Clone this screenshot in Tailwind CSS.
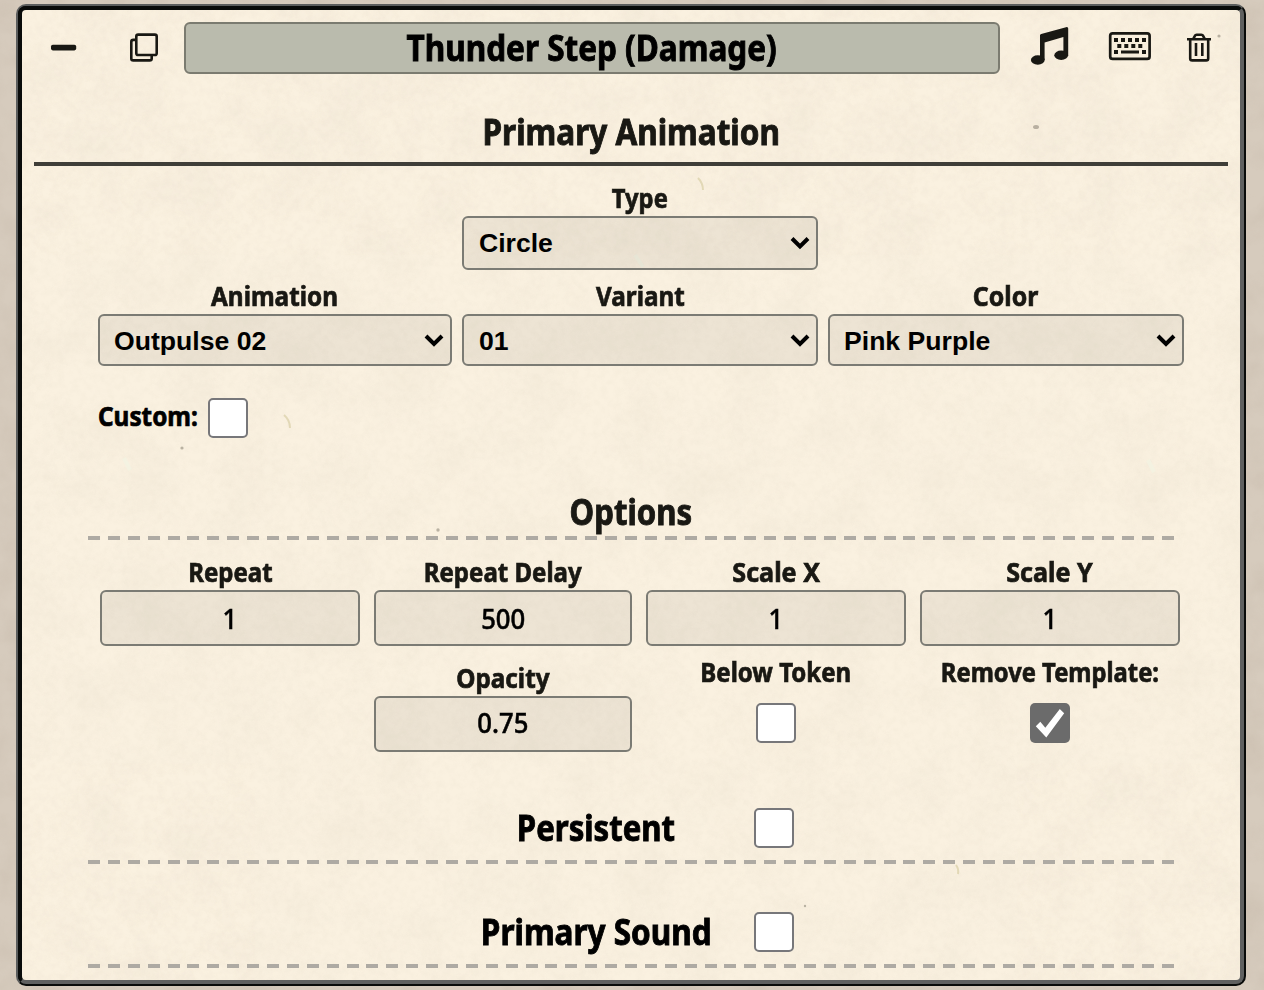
<!DOCTYPE html>
<html lang="en">
<head>
<meta charset="utf-8">
<title>Thunder Step (Damage)</title>
<script src="https://cdn.jsdelivr.net/npm/@tailwindcss/browser@4"></script>
</head>
<body class="relative h-[990px] w-[1264px] overflow-hidden bg-[#d6cbbd] px-4 pt-1 font-['Noto_Sans',sans-serif] text-[#191813]">
<!-- stone texture behind the panel -->
<svg class="absolute inset-0" width="1264" height="990" aria-hidden="true">
  <filter id="stone" x="0" y="0" width="100%" height="100%"><feTurbulence type="fractalNoise" baseFrequency="0.03" numOctaves="4" seed="4"/><feColorMatrix values="0 0 0 0 .5  0 0 0 0 .42  0 0 0 0 .34  .8 0 0 0 -.3"/></filter>
  <rect width="1264" height="990" filter="url(#stone)" opacity=".6"/>
</svg>
<div class="relative h-[982px] w-[1230px] rounded-[10px] border-2 border-t-[#5b5d5d] border-l-[#5b5d5d] border-r-[#090b0a] border-b-[#090b0a] bg-[#090b0a]">
<div class="relative h-[978px] w-[1226px] overflow-hidden rounded-lg border-4 border-t-[#090b0a] border-l-[#090b0a] border-r-[#5f6060] border-b-[#5f6060] bg-[#faf1e0]">
  <!-- paper texture -->
  <svg class="absolute inset-0" width="1218" height="970" aria-hidden="true">
    <filter id="paper" x="0" y="0" width="100%" height="100%"><feTurbulence type="fractalNoise" baseFrequency="0.02" numOctaves="5" seed="9"/><feColorMatrix values="0 0 0 0 .62  0 0 0 0 .56  0 0 0 0 .45  .5 0 0 0 -.18"/></filter>
    <filter id="grain" x="0" y="0" width="100%" height="100%"><feTurbulence type="fractalNoise" baseFrequency="0.14" numOctaves="3" seed="21"/><feColorMatrix values="0 0 0 0 .6  0 0 0 0 .54  0 0 0 0 .43  .5 0 0 0 -.18"/></filter>
    <rect width="1218" height="970" filter="url(#paper)" opacity=".4"/>
    <rect width="1218" height="970" filter="url(#grain)" opacity=".3"/>
    <g fill="#8f887a" opacity=".6"><ellipse cx="1014" cy="117" rx="3" ry="2"/><circle cx="1197" cy="26" r="1.6"/><circle cx="416" cy="520" r="1.7"/><circle cx="783" cy="896" r="1.2"/><circle cx="160" cy="438" r="1.6"/></g>
    <g fill="none" stroke="#d9cfa5" stroke-width="2" opacity=".7"><path d="M676 168q5 5 5 12"/><path d="M262 405q6 5 6 13"/><path d="M934 855q3 4 2 9"/></g>
    <g fill="none" stroke="#f2f4e3" stroke-width="4" opacity=".7"><path d="M102 448l6 12"/><path d="M1126 450l6 12"/><path d="M613 245l8 12"/></g>
  </svg>

  <div class="relative flex flex-col">
    <!-- header -->
    <header class="mt-3 flex h-[52px] items-center">
      <svg class="ml-7 shrink-0" width="28" height="52" viewBox="50 22 28 52"><rect x="51" y="44.800" width="25.200" height="5.600" rx="1.800" fill="#191813"/></svg>
      <svg class="ml-[50px] shrink-0" width="32" height="52" viewBox="128 22 32 52" fill="none" stroke="#191813" stroke-width="2.600"><rect x="136.300" y="34.600" width="20.400" height="20.400" rx="1.800"/><path d="M136 39.900h-2.700a2 2 0 0 0-2 2v16.500a2 2 0 0 0 2 2h16.400a2 2 0 0 0 2-2v-3.200"/></svg>
      <div class="ml-6 flex h-[52px] w-[816px] shrink-0 items-center justify-center rounded-md border-2 border-[#7b7b70] bg-[#babbad] text-[35px] leading-none font-bold text-black [-webkit-text-stroke:0.9px]"><span class="relative -top-px scale-x-90 whitespace-nowrap">Thunder Step (Damage)</span></div>
      <svg class="ml-[29px] shrink-0" width="42" height="52" viewBox="1029 22 42 52" fill="#191813"><path d="M1040 35.500Q1040 34.400 1041.200 34L1066 27.200Q1068.200 26.700 1068.200 28.600V55.500H1063.400V37L1044.600 42.600V60H1040z"/><ellipse cx="1037.800" cy="60" rx="6.900" ry="4.700"/><ellipse cx="1061.200" cy="55.200" rx="6.900" ry="4.700"/></svg>
      <svg class="ml-9 shrink-0" width="46" height="52" viewBox="1107 22 46 52" fill="#191813"><rect x="1110.200" y="33.300" width="39.400" height="25.600" rx="2.500" fill="none" stroke="#191813" stroke-width="2.700"/><path d="M1114 38h4v4h-4zM1121 38h4v4h-4zM1128 38h4v4h-4zM1135 38h4v4h-4zM1142 38h4v4h-4zM1117.300 44h4v4h-4zM1124.300 44h4v4h-4zM1131.300 44h4v4h-4zM1138.300 44h4v4h-4zM1114 50h4v4h-4zM1142 50h4v4h-4zM1121 50.500h18v3h-18z"/></svg>
      <svg class="ml-[33px] shrink-0" width="26" height="52" viewBox="1186 22 26 52" fill="none" stroke="#191813" stroke-width="2.600"><path d="M1187 39.200h24M1193.300 38.800L1195 35.700Q1195.500 34.700 1196.600 34.700H1201.400Q1202.500 34.700 1203 35.700L1204.700 38.800M1190.200 39.500V58.400Q1190.200 60.400 1192.200 60.400H1206.200Q1208.200 60.400 1208.200 58.400V39.500M1196 43v13M1202.300 43v13"/></svg>
    </header>

    <!-- primary animation -->
    <section>
      <h2 class="mt-[38px] flex h-[40px] items-center justify-center text-[35px] leading-none font-bold [-webkit-text-stroke:0.9px]"><span class="relative -top-[0.5px] scale-x-90">Primary Animation</span></h2>
      <div class="mx-3 mt-[10px] h-1 bg-[#3f3e38]"></div>
      <div class="ml-[76px] grid w-[1086px] grid-cols-[354px_356px_356px] gap-x-[10px] text-[27px] leading-none font-bold">
        <div class="col-start-2 mt-[14px]">
          <div class="flex h-9 items-center justify-center pb-[2px] [-webkit-text-stroke:0.7px]"><span class="scale-x-[.88]">Type</span></div>
          <div class="flex h-[54px] items-center justify-between rounded-md border-2 border-[#7b7b74] bg-black/5 pr-[6px] pl-[15px] font-['Liberation_Sans',sans-serif] text-[26.6px] text-black"><span>Circle</span><svg width="20" height="16" viewBox="0 0 20 16" fill="none" stroke="#000" stroke-width="4"><path d="M2 3.500l8 8 8-8"/></svg></div>
        </div>
        <div class="col-start-1 mt-2">
          <div class="flex h-9 items-center justify-center pb-[2px] [-webkit-text-stroke:0.7px]"><span class="scale-x-90">Animation</span></div>
          <div class="flex h-[52px] items-center justify-between rounded-md border-2 border-[#7b7b74] bg-black/5 pr-[6px] pl-[14px] font-['Liberation_Sans',sans-serif] text-[26.6px] text-black"><span class="relative top-px">Outpulse 02</span><svg width="20" height="16" viewBox="0 0 20 16" fill="none" stroke="#000" stroke-width="4"><path d="M2 4l8 8 8-8"/></svg></div>
        </div>
        <div class="mt-2">
          <div class="flex h-9 items-center justify-center pb-[2px] [-webkit-text-stroke:0.7px]"><span class="scale-x-90">Variant</span></div>
          <div class="flex h-[52px] items-center justify-between rounded-md border-2 border-[#7b7b74] bg-black/5 pr-[6px] pl-[15px] font-['Liberation_Sans',sans-serif] text-[26.6px] text-black"><span class="relative top-px">01</span><svg width="20" height="16" viewBox="0 0 20 16" fill="none" stroke="#000" stroke-width="4"><path d="M2 4l8 8 8-8"/></svg></div>
        </div>
        <div class="mt-2">
          <div class="flex h-9 items-center justify-center pb-[2px] [-webkit-text-stroke:0.7px]"><span class="scale-x-[.92]">Color</span></div>
          <div class="flex h-[52px] items-center justify-between rounded-md border-2 border-[#7b7b74] bg-black/5 pr-[6px] pl-[14px] font-['Liberation_Sans',sans-serif] text-[26.6px] text-black"><span class="relative top-px">Pink Purple</span><svg width="20" height="16" viewBox="0 0 20 16" fill="none" stroke="#000" stroke-width="4"><path d="M2 4l8 8 8-8"/></svg></div>
        </div>
      </div>
      <div class="mt-8 ml-[76px] flex h-10 items-center text-[27px] leading-none font-bold text-black"><span class="w-[110px] origin-left -translate-y-[3px] scale-x-90 [-webkit-text-stroke:0.7px]">Custom:</span><span class="h-10 w-10 rounded-[5px] border-2 border-[#77777a] bg-white"></span></div>
    </section>

    <!-- options -->
    <section>
      <h2 class="mt-[54px] flex h-[40px] items-center justify-center text-[35px] leading-none font-bold [-webkit-text-stroke:0.9px]"><span class="relative -top-[0.5px] scale-x-[.89]">Options</span></h2>
      <div class="mt-1 ml-[66px] h-1 w-[1086px] bg-[repeating-linear-gradient(90deg,#aeaaa3_0_12px,transparent_12px_19.89px)]"></div>
      <div class="mt-[14px] ml-[78px] grid w-[1080px] grid-cols-[260px_258px_260px_260px] gap-x-[14px] text-[27px] leading-none font-bold">
        <div>
          <div class="flex h-9 items-center justify-center pb-[2px] [-webkit-text-stroke:0.7px]"><span class="scale-x-[.89]">Repeat</span></div>
          <div class="flex h-14 items-center justify-center rounded-md border-2 border-[#7b7b74] bg-black/5 font-medium text-black [-webkit-text-stroke:0.5px]"><span class="scale-x-95">1</span></div>
        </div>
        <div>
          <div class="flex h-9 items-center justify-center pb-[2px] [-webkit-text-stroke:0.7px]"><span class="scale-x-[.89] whitespace-nowrap">Repeat Delay</span></div>
          <div class="flex h-14 items-center justify-center rounded-md border-2 border-[#7b7b74] bg-black/5 font-medium text-black [-webkit-text-stroke:0.5px]"><span class="scale-x-95">500</span></div>
        </div>
        <div>
          <div class="flex h-9 items-center justify-center pb-[2px] [-webkit-text-stroke:0.7px]"><span class="scale-x-[.93]">Scale X</span></div>
          <div class="flex h-14 items-center justify-center rounded-md border-2 border-[#7b7b74] bg-black/5 font-medium text-black [-webkit-text-stroke:0.5px]"><span class="scale-x-95">1</span></div>
        </div>
        <div>
          <div class="flex h-9 items-center justify-center pb-[2px] [-webkit-text-stroke:0.7px]"><span class="scale-x-[.93]">Scale Y</span></div>
          <div class="flex h-14 items-center justify-center rounded-md border-2 border-[#7b7b74] bg-black/5 font-medium text-black [-webkit-text-stroke:0.5px]"><span class="scale-x-95">1</span></div>
        </div>
        <div class="col-start-2 mt-[14px]">
          <div class="flex h-9 items-center justify-center pb-[2px] [-webkit-text-stroke:0.7px]"><span class="scale-x-90">Opacity</span></div>
          <div class="flex h-14 items-center justify-center rounded-md border-2 border-[#7b7b74] bg-black/5 pb-[3px] font-medium text-black [-webkit-text-stroke:0.5px]"><span class="scale-x-95">0.75</span></div>
        </div>
        <div class="mt-2 flex flex-col items-center">
          <div class="flex h-9 items-center justify-center pb-[2px] [-webkit-text-stroke:0.7px]"><span class="scale-x-[.89] whitespace-nowrap">Below Token</span></div>
          <span class="mt-[13px] h-10 w-10 rounded-[5px] border-2 border-[#77777a] bg-white"></span>
        </div>
        <div class="mt-2 flex flex-col items-center">
          <div class="flex h-9 items-center justify-center pb-[2px] [-webkit-text-stroke:0.7px]"><span class="scale-x-[.88] whitespace-nowrap">Remove Template:</span></div>
          <span class="mt-[13px] h-10 w-10 rounded-[5px] bg-[#6b6b6b]"><svg width="40" height="40" viewBox="0 0 40 40" fill="#fff"><path d="M5.800 23.300L10.300 18.800L15.300 24.800L29.800 6L34.200 10.300L16.300 34.500z"/></svg></span>
        </div>
      </div>
    </section>

    <!-- toggled sections -->
    <section>
      <div class="mt-14 ml-[434px] flex h-10 items-center text-[35px] leading-none font-bold text-black [-webkit-text-stroke:0.9px]"><span class="flex w-[280px] justify-center"><span class="relative -top-[0.5px] scale-x-[.89]">Persistent</span></span><span class="ml-[18px] h-10 w-10 rounded-[5px] border-2 border-[#77777a] bg-white"></span></div>
      <div class="mt-3 ml-[66px] h-1 w-[1086px] bg-[repeating-linear-gradient(90deg,#aeaaa3_0_12px,transparent_12px_19.89px)]"></div>
    </section>
    <section>
      <div class="mt-12 ml-[434px] flex h-10 items-center text-[35px] leading-none font-bold text-black [-webkit-text-stroke:0.9px]"><span class="flex w-[280px] justify-center"><span class="relative -top-[0.5px] scale-x-90 whitespace-nowrap">Primary Sound</span></span><span class="ml-[18px] h-10 w-10 rounded-[5px] border-2 border-[#77777a] bg-white"></span></div>
      <div class="mt-3 ml-[66px] h-1 w-[1086px] bg-[repeating-linear-gradient(90deg,#aeaaa3_0_12px,transparent_12px_19.89px)]"></div>
    </section>
  </div>
</div>
</div>
</body>
</html>
